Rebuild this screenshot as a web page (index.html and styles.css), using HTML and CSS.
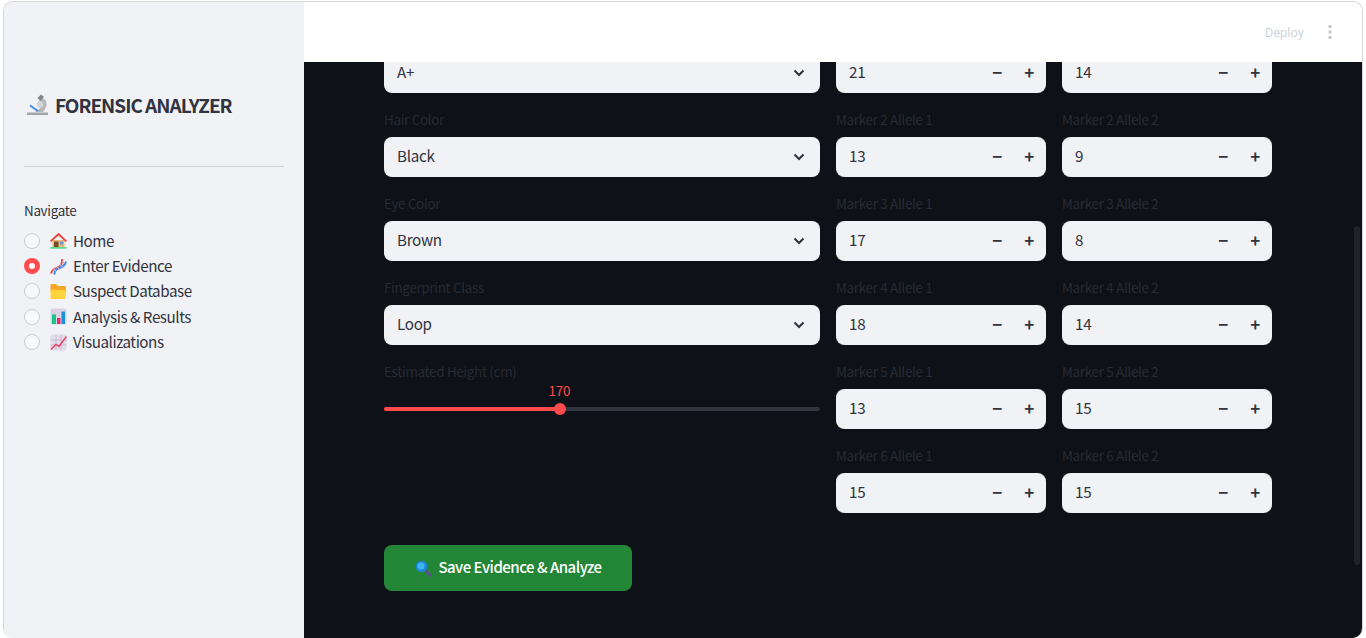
FILE: index.html
```html
<!DOCTYPE html>
<html lang="en">
<head>
<meta charset="utf-8">
<title>Forensic Analyzer</title>
<link rel="stylesheet" href="styles.css">
</head>
<body>
<div class="frame">
  <aside class="sidebar">
    <h1 class="brand">
      <svg class="brand-icon" viewBox="0 0 21 21"><path d="M0 18.500h21V21H0z" fill="#a4a6a9"/><path d="M12.500 4.500c4.500-1 7.500 2 7 6 -.4 3-2 5.500-3.500 7.500H7.500c2.500-1 6-3 6.500-7 .2-1.800-.5-3-1.500-3.300z" fill="#b4b6b9"/><path d="M10.500 4l3.500-3.500 3 2.500-3.500 3.800z" fill="#808286"/><circle cx="13" cy="10.500" r="3.200" fill="#d2d4d6"/><path d="M3 11.500l8 5.500" stroke="#3f8ff0" stroke-width="2" fill="none"/></svg>
      <span>FORENSIC ANALYZER</span>
    </h1>
    <hr class="rule">
    <p class="nav-label">Navigate</p>
    <ul class="nav">
      <li class="nav-item"><span class="radio"></span>
        <svg class="emoji" viewBox="0 0 17 17"><path d="M2.500 8h12v7h-12z" fill="#f4b874"/><path d="M0 8.800L8.500 .8 17 8.800l-1.200 1.200-7.300-6.500L1.200 10z" fill="#e8453c"/><path d="M4 9.500h4.500V15H4z" fill="#7a4a2b"/><path d="M10 9.500h3.200v3H10z" fill="#5b9bd5"/><path d="M.5 15h16v1.800H.5z" fill="#52dc8c"/></svg>
        <span>Home</span></li>
      <li class="nav-item"><span class="radio radio-on"></span>
        <svg class="emoji" viewBox="0 0 17 17"><path d="M1 15.500C3 8 8 12 11 7c1-1.800 1.200-3.500 1.200-6" stroke="#e8504c" stroke-width="2" fill="none"/><path d="M4.500 16.500c-.2-3 1.500-5 4-6 3.500-1.500 6.500-2.500 7.500-7" stroke="#3b8fe6" stroke-width="2" fill="none"/><path d="M3.500 10.500l2.500 3M7 9l2.500 2.500M10 6.500l3 3M12 3.500l3 1.500" stroke="#bcaed0" stroke-width="1.200"/></svg>
        <span>Enter Evidence</span></li>
      <li class="nav-item"><span class="radio"></span>
        <svg class="emoji" viewBox="0 0 17 17"><path d="M.5 2.500C.5 1.500 1 1 2 1h4l2 2h6.500c1 0 1.500.5 1.500 1.500V9H.5z" fill="#f5a623"/><path d="M.5 16V8c0-.8.5-1.200 1-1.200H16.500l-1 8.200c-.1.700-.5 1-1.200 1z" fill="#ffd43f"/></svg>
        <span>Suspect Database</span></li>
      <li class="nav-item"><span class="radio"></span>
        <svg class="emoji" viewBox="0 0 17 17"><rect x=".5" y=".5" width="16" height="16" rx="1.500" fill="#dcd3e2"/><path d="M2 6.500h4V16H2z" fill="#14c489"/><path d="M7 10h3.500v6H7z" fill="#f0246f"/><path d="M11.500 3.500H15V16h-3.500z" fill="#1791da"/></svg>
        <span>Analysis &amp; Results</span></li>
      <li class="nav-item"><span class="radio"></span>
        <svg class="emoji" viewBox="0 0 17 17"><rect x=".5" y=".5" width="16" height="16" rx="1.500" fill="#e3dce9"/><path d="M.5 6h16M.5 11h16M6 .5v16M11 .5v16" stroke="#bfb3c9" stroke-width=".8"/><path d="M1 15.500l5-5 3 2 7.500-10" stroke="#ee3f66" stroke-width="1.500" fill="none"/></svg>
        <span>Visualizations</span></li>
    </ul>
  </aside>
  <div class="main">
    <header class="topbar">
      <span class="deploy">Deploy</span>
      <svg class="kebab" viewBox="0 0 6 16"><circle cx="3" cy="2.500" r="1.700"/><circle cx="3" cy="8" r="1.700"/><circle cx="3" cy="13.500" r="1.700"/></svg>
    </header>
    <main class="content">
      <div class="form">
        <div class="grid">
          <div class="field"><label class="label">Blood Type</label><div class="select"><span>A+</span><svg class="chev" viewBox="0 0 12 8"><path d="M1.500 1.500L6 6l4.500-4.500"/></svg></div></div>
          <div class="field"><label class="label">Marker 1 Allele 1</label><div class="num"><div class="num-in"><span class="num-val">21</span><span class="step">&minus;</span><span class="step">+</span></div></div></div>
          <div class="field"><label class="label">Marker 1 Allele 2</label><div class="num"><div class="num-in"><span class="num-val">14</span><span class="step">&minus;</span><span class="step">+</span></div></div></div>

          <div class="field"><label class="label">Hair Color</label><div class="select"><span>Black</span><svg class="chev" viewBox="0 0 12 8"><path d="M1.500 1.500L6 6l4.500-4.500"/></svg></div></div>
          <div class="field"><label class="label">Marker 2 Allele 1</label><div class="num"><div class="num-in"><span class="num-val">13</span><span class="step">&minus;</span><span class="step">+</span></div></div></div>
          <div class="field"><label class="label">Marker 2 Allele 2</label><div class="num"><div class="num-in"><span class="num-val">9</span><span class="step">&minus;</span><span class="step">+</span></div></div></div>

          <div class="field"><label class="label">Eye Color</label><div class="select"><span>Brown</span><svg class="chev" viewBox="0 0 12 8"><path d="M1.500 1.500L6 6l4.500-4.500"/></svg></div></div>
          <div class="field"><label class="label">Marker 3 Allele 1</label><div class="num"><div class="num-in"><span class="num-val">17</span><span class="step">&minus;</span><span class="step">+</span></div></div></div>
          <div class="field"><label class="label">Marker 3 Allele 2</label><div class="num"><div class="num-in"><span class="num-val">8</span><span class="step">&minus;</span><span class="step">+</span></div></div></div>

          <div class="field"><label class="label">Fingerprint Class</label><div class="select"><span>Loop</span><svg class="chev" viewBox="0 0 12 8"><path d="M1.500 1.500L6 6l4.500-4.500"/></svg></div></div>
          <div class="field"><label class="label">Marker 4 Allele 1</label><div class="num"><div class="num-in"><span class="num-val">18</span><span class="step">&minus;</span><span class="step">+</span></div></div></div>
          <div class="field"><label class="label">Marker 4 Allele 2</label><div class="num"><div class="num-in"><span class="num-val">14</span><span class="step">&minus;</span><span class="step">+</span></div></div></div>

          <div class="field"><label class="label">Estimated Height (cm)</label>
            <div class="slider">
              <div class="track"><div class="fill" style="width:40.4%"><span class="thumb"></span><span class="slider-val">170</span></div></div>
            </div>
          </div>
          <div class="field"><label class="label">Marker 5 Allele 1</label><div class="num"><div class="num-in"><span class="num-val">13</span><span class="step">&minus;</span><span class="step">+</span></div></div></div>
          <div class="field"><label class="label">Marker 5 Allele 2</label><div class="num"><div class="num-in"><span class="num-val">15</span><span class="step">&minus;</span><span class="step">+</span></div></div></div>

          <div class="field field-num1"><label class="label">Marker 6 Allele 1</label><div class="num"><div class="num-in"><span class="num-val">15</span><span class="step">&minus;</span><span class="step">+</span></div></div></div>
          <div class="field"><label class="label">Marker 6 Allele 2</label><div class="num"><div class="num-in"><span class="num-val">15</span><span class="step">&minus;</span><span class="step">+</span></div></div></div>
        </div>
        <button class="save" type="button">
          <svg class="emoji" viewBox="0 0 17 17"><path d="M10 10l5.500 5.500" stroke="#5d4f8f" stroke-width="2.800" stroke-linecap="round"/><circle cx="6.500" cy="6.500" r="5.800" fill="#1b86d8"/><circle cx="6" cy="6" r="3.600" fill="#3db5f2"/></svg>
          <span>Save Evidence &amp; Analyze</span>
        </button>
      </div>
      <div class="scroll-thumb"></div>
    </main>
  </div>
</div>
</body>
</html>
```
FILE: styles.css
```css
* { box-sizing: border-box; }
html, body { height: 100%; }
body {
  margin: 0;
  padding: 1px 3px 0;
  background: #fff;
  overflow: hidden;
  font-family: "Noto Sans CJK SC", "Noto Sans", sans-serif;
  color: #31333f;
}
.frame {
  display: flex;
  height: 637px;
  border: 1px solid #d6d6d6;
  border-bottom: 0;
  border-radius: 10px;
  overflow: hidden;
}
.sidebar {
  flex: 0 0 300px;
  background: #f0f2f6;
  padding: 89px 20px 0;
}
.brand {
  display: flex;
  align-items: center;
  gap: 7px;
  margin: 0 0 0 3px;
  font-size: 19px;
  letter-spacing: -1.02px;
  line-height: 27px;
  font-weight: 600;
}
.brand-icon { width: 21px; height: 21px; }
.rule { height: 1px; margin: 48px 0 0; border: 0; background: #cfd0d3; }
.nav-label { margin: 33px 0 0; font-size: 13.4px; letter-spacing: -0.3px; line-height: 20px; }
.nav { list-style: none; margin: 8px 0 0; padding: 0; }
.nav-item {
  display: flex;
  align-items: center;
  height: 25.4px;
  font-size: 15.2px;
  letter-spacing: -0.45px;
  line-height: 24px;
}
.nav-item span:last-child { padding-bottom: 2px; }
.radio {
  flex: none;
  width: 16px;
  height: 16px;
  margin-right: 10px;
  border: 1px solid #cbccd0;
  border-radius: 50%;
  background: #f8f9fb;
}
.radio-on { border: 5px solid #ff4b4b; background: #fff; }
.emoji { flex: none; width: 17px; height: 17px; }
.nav-item .emoji { margin-right: 6px; }
.main { flex: 1; display: flex; flex-direction: column; min-width: 0; }
.topbar {
  flex: 0 0 60px;
  display: flex;
  align-items: center;
  justify-content: flex-end;
  padding: 0 29px 0 0;
  background: #fff;
  position: relative;
  z-index: 1;
}
.deploy {
  margin-right: 23px;
  font-family: Roboto, sans-serif;
  font-size: 13px;
  color: #cfd6e0;
}
.kebab { width: 6px; height: 16px; fill: #c5c7cc; }
.content {
  flex: 1;
  position: relative;
  background: #0e1117;
  padding: 0 90px 0 80px;
  overflow: hidden;
}
.form { margin-top: -37px; }
.grid {
  display: grid;
  grid-template-columns: 436px 210px 210px;
  gap: 16px;
}
.field-num1 { grid-column: 2; }
.label {
  display: block;
  height: 22px;
  margin-bottom: 6px;
  font-size: 13.4px;
  letter-spacing: -0.3px;
  line-height: 20px;
  color: #282b34;
}
.select {
  display: flex;
  align-items: center;
  justify-content: space-between;
  height: 40px;
  padding: 0 15px 0 13px;
  border-radius: 8px;
  background: #f0f2f6;
  font-size: 15.2px;
  letter-spacing: -0.3px;
}
.select span { padding-bottom: 4px; }
.chev { width: 12px; height: 8px; fill: none; stroke: #31333f; stroke-width: 2; }
.num { height: 40px; border-radius: 8px; background: #8f9095; }
.num-in {
  display: flex;
  align-items: center;
  height: 100%;
  padding: 0 1px 0 13px;
  border-radius: 9px;
  background: #f0f2f6;
  font-size: 15.2px;
  letter-spacing: -0.3px;
}
.num-val { flex: 1; padding-bottom: 4px; }
.step {
  width: 32px;
  height: 40px;
  text-align: center;
  font-size: 17px;
  font-weight: 700;
  line-height: 38px;
}
.slider { height: 40px; padding-top: 18px; }
.track { height: 4px; border-radius: 2px; background: #31353f; }
.fill { position: relative; height: 4px; border-radius: 2px; background: #ff4b4b; }
.thumb {
  position: absolute;
  right: -6px;
  top: -4px;
  width: 12px;
  height: 12px;
  border-radius: 50%;
  background: #ff4b4b;
}
.slider-val {
  position: absolute;
  right: -10px;
  top: -28px;
  font-size: 13.4px;
  letter-spacing: -0.25px;
  line-height: 22px;
  color: #ff4b4b;
}
.save {
  display: flex;
  align-items: center;
  justify-content: center;
  gap: 6px;
  width: 248px;
  height: 46px;
  margin-top: 32px;
  padding: 0 0 0 1px;
  border: 0;
  border-radius: 8px;
  background: #238636;
  color: #fff;
  font: 500 15px "Noto Sans CJK SC", "Noto Sans", sans-serif;
  letter-spacing: -0.5px;
}
.save span { padding-bottom: 4px; }
.scroll-thumb {
  position: absolute;
  right: 2px;
  top: 164px;
  width: 6px;
  height: 339px;
  border-radius: 3px;
  background: #1e222b;
}
```
